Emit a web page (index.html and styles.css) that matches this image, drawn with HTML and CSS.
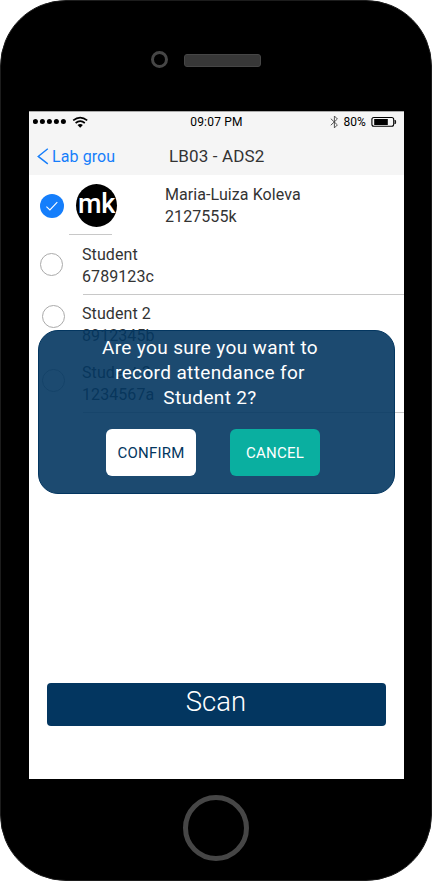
FILE: index.html
```html
<!DOCTYPE html>
<html lang="en">
<head>
<meta charset="utf-8">
<title>LB03 - ADS2</title>
<link rel="stylesheet" href="styles.css">
</head>
<body>
<div class="phone">
  <div class="phone-top"><span class="camera"></span><span class="speaker"></span></div>
  <main class="screen">
    <header class="header">
      <div class="status">
        <div class="signal">
          <svg width="56" height="14" viewBox="0 0 56 14">
            <g fill="#000"><circle cx="2.4" cy="6.5" r="2.5"/><circle cx="9.4" cy="6.5" r="2.5"/><circle cx="16.4" cy="6.5" r="2.5"/><circle cx="23.4" cy="6.5" r="2.5"/><circle cx="30.4" cy="6.5" r="2.5"/></g>
            <g fill="none" stroke="#000" stroke-width="1.7"><path d="M40.2 5.3q7-5.4 14 0"/><path d="M42.6 8q4.6-3.6 9.2 0"/></g>
            <path d="M44.5 10q2.7-2 5.4 0l-2.7 2.7z" fill="#000"/>
          </svg>
        </div>
        <div class="time">09:07 PM</div>
        <div class="power">
          <svg width="9" height="14" viewBox="0 0 9 14"><path d="M.8 3.7l6.6 6.2-3 3V1l3 3-6.6 6.2" fill="none" stroke="#444" stroke-width=".9"/></svg>
          <span class="percent">80%</span>
          <svg width="26" height="12" viewBox="0 0 26 12"><rect x=".9" y="1.5" width="21.8" height="8.8" rx="2" fill="none" stroke="#000" stroke-width="1.1"/><rect x="3.2" y="3" width="13.6" height="6" fill="#000"/><path d="M24 4q1.6 2 0 4z" fill="#000" stroke="#000" stroke-width=".7"/></svg>
        </div>
      </div>
      <nav class="nav">
        <div class="back"><svg width="12" height="18" viewBox="0 0 12 18"><path d="M10.8 .8L1.2 8.4l9.6 7.5" fill="none" stroke="#157efb" stroke-width="1.4"/></svg><span>Lab grou</span></div>
        <h1 class="title">LB03 - ADS2</h1>
      </nav>
    </header>
    <section class="list">
      <article class="row row-main">
        <svg class="check" width="24" height="24" viewBox="0 0 24 24"><circle cx="12" cy="12" r="12" fill="#157efb"/><path d="M6.4 12.7l3.5 3.2 7.4-7.8" fill="none" stroke="#fff" stroke-width="1.1"/></svg>
        <div class="portrait"><div class="avatar">mk</div></div>
        <div class="student">Maria-Luiza Koleva<br>2127555k</div>
      </article>
      <article class="row row-first"><span class="radio"></span><div class="student">Student<br>6789123c</div></article>
      <article class="row row-second"><span class="radio"></span><div class="student">Student 2<br>8912345b</div></article>
      <article class="row row-third"><span class="radio"></span><div class="student">Student 3<br>1234567a</div></article>
    </section>
    <button class="scan">Scan</button>
    <section class="dialog">
      <p class="question">Are you sure you want to<br>record attendance for<br>Student 2?</p>
      <div class="actions"><button class="action confirm">CONFIRM</button><button class="action cancel">CANCEL</button></div>
    </section>
  </main>
  <div class="phone-bottom"><span class="home"></span></div>
</div>
</body>
</html>
```
FILE: styles.css
```css
* { box-sizing: border-box; }
body { margin: 0; background: #fff; font-family: Roboto, sans-serif; color: #333; }
button { border: 0; padding: 0; font-family: inherit; }
svg { display: block; flex: none; }
.phone { width: 432px; height: 881px; border: 1px solid #1c1c1c; border-radius: 66px; background: #000; overflow: hidden; padding: 0 27px 0 28px; }
.phone-top { height: 110px; display: flex; align-items: flex-start; padding: 50px 0 0 122px; gap: 16px; }
.camera { width: 17px; height: 17px; border: 3px solid #464646; border-radius: 50%; }
.speaker { width: 77px; height: 13px; margin-top: 3px; border: 1px solid #464646; border-radius: 3px; background: #373737; }
.screen { position: relative; width: 375px; height: 668px; background: #fff; }
.header { height: 64px; background: #f5f5f5; border-top: 1px solid #aaa; }
.status { height: 20px; display: grid; grid-template-columns: 1fr 80px 1fr; align-items: center; color: #000; font-size: 12px; }
.signal { padding-left: 4px; }
.time { text-align: center; letter-spacing: .2px; }
.power { display: flex; align-items: center; padding-left: 73px; }
.percent { margin-left: 5px; margin-right: 5px; }
.nav { height: 43px; display: grid; grid-template-columns: 140px 1fr; }
.back { display: flex; align-items: center; gap: 3px; padding: 6px 0 0 8px; height: 43px; color: #157efb; font-size: 16px; letter-spacing: .1px; }
.title { margin: 13px 0 0; font-size: 17px; line-height: 22px; font-weight: 400; letter-spacing: .15px; }
.row { display: flex; height: 59px; }
.student { font-size: 16px; line-height: 22px; letter-spacing: .08px; }
.row-main { padding-left: 11px; }
.check { margin-top: 19px; }
.portrait { width: 43px; height: 60px; margin-left: 5px; padding: 9px 0 0 7px; border-bottom: 1px solid #c8c8c8; flex: none; }
.avatar { width: 41px; height: 43px; border-radius: 50%; background: #000; color: #fff; font: 500 27px/41px Roboto, sans-serif; letter-spacing: -.4px; text-align: center; }
.row-main .student { margin: 9px 0 0 53px; }
.radio { width: 23px; height: 23px; border: 1px solid #aaa; border-radius: 50%; flex: none; }
.row-first { height: 61px; padding-left: 11px; }
.row-first .radio { margin: 19px 20px 0 0; }
.row-first .student { flex: 1; margin-left: -1px; padding-top: 10px; }
.row-first, .row-third { background: linear-gradient(#c8c8c8, #c8c8c8) 54px 100% / 321px 1px no-repeat; }
.row-second, .row-third { padding-left: 13px; }
.row-second .radio { margin: 10px 17px 0 0; }
.row-second .student { padding-top: 8px; }
.row-third .radio { margin: 15px 17px 0 0; }
.row-third .student { padding-top: 8px; }
.scan { display: block; width: 339px; height: 43px; margin: 270px 0 0 18px; padding: 0 1px 6px 0; border-radius: 4px; background: #033660; color: #fff; font-size: 27.5px; font-weight: 300; }
.dialog { position: absolute; left: 9px; top: 219px; width: 357px; height: 164px; padding-top: 4px; border: 1px solid #033660; border-radius: 20px; background: rgba(3, 54, 96, .9); }
.question { width: 342px; margin: 0; text-align: center; color: #fff; font-size: 19px; line-height: 25px; letter-spacing: .36px; }
.actions { display: flex; gap: 34px; padding: 19px 0 0 67px; }
.action { width: 90px; height: 47px; border-radius: 6px; font-size: 15px; letter-spacing: .25px; }
.confirm { background: #fff; color: #033660; }
.cancel { background: #0aafa0; color: #fff; }
.phone-bottom { display: flex; justify-content: center; padding: 16px 2px 0 0; }
.home { width: 66px; height: 66px; border: 5px solid #464646; border-radius: 50%; }
```
